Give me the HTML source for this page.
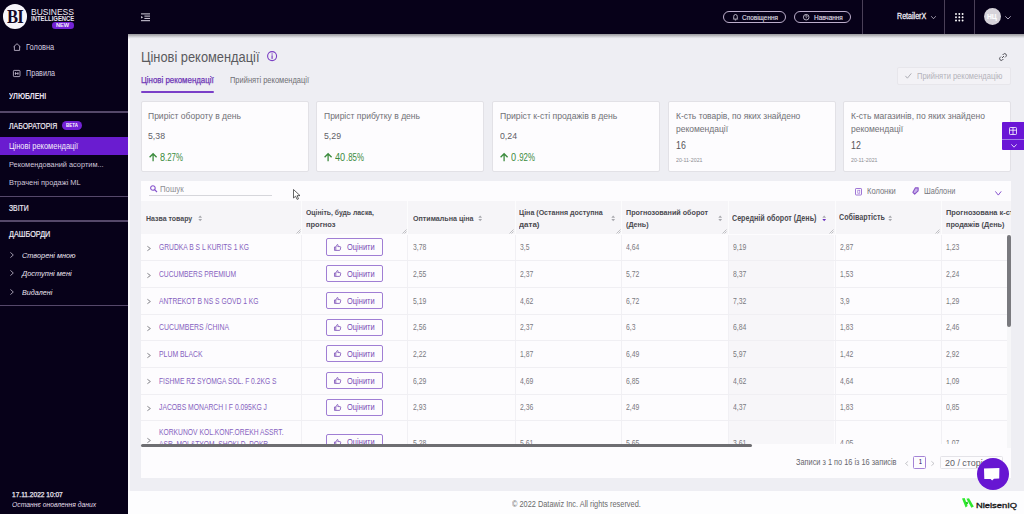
<!DOCTYPE html>
<html><head><meta charset="utf-8">
<style>
html,body{margin:0;padding:0;}
body{width:1024px;height:514px;overflow:hidden;position:relative;background:#eeeef3;font-family:"Liberation Sans",sans-serif;}
.t{position:absolute;white-space:nowrap;line-height:1;transform-origin:0 0;}
.a{position:absolute;}
svg{position:absolute;overflow:visible;}
</style></head><body>
<div class="a" style="left:128px;top:34px;width:896px;height:456.5px;background:#eeeef3"></div>
<div class="a" style="left:128px;top:490.5px;width:896px;height:23.5px;background:#fdfdfe"></div>
<div class="a" style="left:128px;top:34px;width:2px;height:456.5px;background:#fafafc"></div>
<div class="t" style="left:512px;top:499.92px;font-size:8.721px;color:#6a6a6a;font-weight:400;font-style:normal;transform:scaleX(0.8457);">© 2022 Datawiz Inc. All rights reserved.</div>
<svg style="left:962.4px;top:498px" width="12" height="10" viewBox="0 0 12 10"><path d="M0 0.6 L2.6 0 L5.6 8 L3.6 9.6 Z" fill="#2ee82e"/><path d="M4.4 0.8 L7 0.2 L11.8 8.4 L9.4 9.8 Z" fill="#2ee82e"/><path d="M3.6 4.6 L5.4 3.6 L6.2 5.6 L4.8 6.8 Z" fill="#1fc41f"/></svg>
<div class="t" style="left:976.2px;top:501.86px;font-size:7.849px;color:#1c1c1c;font-weight:400;font-style:normal;transform:scaleX(1.1956);-webkit-text-stroke:0.35px #1c1c1c">NielsenIQ</div>
<div class="a" style="left:0px;top:0px;width:1024px;height:34px;background:#070119"></div>
<div class="a" style="left:128px;top:34px;width:896px;height:5px;background:linear-gradient(#9a9a9e 0px,#b2b2b6 1.4px,#d8d8dd 3px,#eeeef3 4.6px)"></div>
<svg style="left:141px;top:12.5px" width="9" height="8.5" viewBox="0 0 9 8.5"><g stroke="#e4dfec" stroke-width="0.95"><line x1="0" y1="0.9" x2="9" y2="0.9"/><line x1="3.4" y1="3.1" x2="9" y2="3.1"/><line x1="3.4" y1="5.4" x2="9" y2="5.4"/><line x1="0" y1="7.7" x2="9" y2="7.7"/></g><path d="M0.2 2.9 L2 4.25 L0.2 5.6Z" fill="#f0ecf6"/></svg>
<div class="a" style="left:722.8px;top:10.9px;width:63.5px;height:12.2px;border:1px solid #bcaecb;border-radius:7px;box-sizing:border-box"></div>
<svg style="left:732.5px;top:13.8px" width="5" height="6.5" viewBox="0 0 5 6.5"><path d="M0.7 4.6 L0.7 2.6 Q0.7 0.5 2.5 0.5 Q4.3 0.5 4.3 2.6 L4.3 4.6 L4.7 5.1 L0.3 5.1 Z M1.8 6 L3.2 6" fill="none" stroke="#e6e1ec" stroke-width="0.75"/></svg>
<div class="t" style="left:742px;top:14.20px;font-size:7.558px;color:#e6e0ee;font-weight:400;font-style:normal;transform:scaleX(0.8536);-webkit-text-stroke:0.1px #e6e0ee">Сповіщення</div>
<div class="a" style="left:794.4px;top:10.9px;width:57px;height:12.2px;border:1px solid #bcaecb;border-radius:7px;box-sizing:border-box"></div>
<svg style="left:803px;top:13.8px" width="6.5" height="6.5" viewBox="0 0 6.5 6.5"><circle cx="3.2" cy="3.2" r="2.8" fill="none" stroke="#e6e1ec" stroke-width="0.75"/><path d="M2.3 2.5 Q2.3 1.5 3.2 1.5 Q4.1 1.5 4.1 2.4 Q4.1 3.1 3.2 3.4 L3.2 4 M3.2 4.7 L3.2 5.1" fill="none" stroke="#e6e1ec" stroke-width="0.65"/></svg>
<div class="t" style="left:814px;top:14.20px;font-size:7.558px;color:#e6e0ee;font-weight:400;font-style:normal;transform:scaleX(0.8502);-webkit-text-stroke:0.1px #e6e0ee">Навчання</div>
<div class="a" style="left:862px;top:0px;width:1px;height:34px;background:#4a4058"></div>
<div class="a" style="left:944px;top:0px;width:1px;height:34px;background:#4a4058"></div>
<div class="a" style="left:974px;top:0px;width:1px;height:34px;background:#4a4058"></div>
<div class="t" style="left:896.5px;top:12.91px;font-size:8.140px;color:#ece8f2;font-weight:400;font-style:normal;transform:scaleX(0.8737);-webkit-text-stroke:0.3px #ece8f2">RetailerX</div>
<svg style="left:930.5px;top:15.5px" width="5" height="3" viewBox="0 0 5 3"><path d="M0.2 0.2 L2.5 2.7 L4.8 0.2" fill="none" stroke="#d8d2e0" stroke-width="0.7"/></svg>
<svg style="left:954.8px;top:12.8px" width="9" height="9" viewBox="0 0 9 9"><circle cx="1.0" cy="1.0" r="0.95" fill="#fff"/><circle cx="1.0" cy="4.25" r="0.95" fill="#fff"/><circle cx="1.0" cy="7.5" r="0.95" fill="#fff"/><circle cx="4.3" cy="1.0" r="0.95" fill="#fff"/><circle cx="4.3" cy="4.25" r="0.95" fill="#fff"/><circle cx="4.3" cy="7.5" r="0.95" fill="#fff"/><circle cx="7.6" cy="1.0" r="0.95" fill="#fff"/><circle cx="7.6" cy="4.25" r="0.95" fill="#fff"/><circle cx="7.6" cy="7.5" r="0.95" fill="#fff"/></svg>
<div class="a" style="left:983.5px;top:8.3px;width:17.2px;height:17px;background:#d6d3da;border-radius:50%"></div>
<div class="t" style="left:987px;top:13.05px;font-size:7.267px;color:#fbfbfd;font-weight:700;font-style:normal;transform:scaleX(0.9197);-webkit-text-stroke:0.2px #fff">НЦ</div>
<svg style="left:1005px;top:16px" width="6" height="3.5" viewBox="0 0 6 3.5"><path d="M0.3 0.3 L3 3 L5.7 0.3" fill="none" stroke="#cfc6dc" stroke-width="0.8"/></svg>
<div class="a" style="left:0px;top:0px;width:128px;height:514px;background:#070119"></div>
<div class="a" style="left:2.8px;top:4.4px;width:24.5px;height:25px;background:#f7f5fa;border-radius:50%"></div>
<div class="t" style="left:7.1px;top:7.9px;font-family:'Liberation Serif',serif;font-size:18px;font-weight:700;color:#150826;letter-spacing:-0.9px;transform:scaleX(0.92);transform-origin:0 0">BI</div>
<div class="t" style="left:30.9px;top:6.68px;font-size:9.593px;color:#f2eef6;font-weight:400;font-style:normal;transform:scaleX(0.8854);">BUSINESS</div>
<div class="t" style="left:30.9px;top:15.10px;font-size:7.558px;color:#e8e4ee;font-weight:700;font-style:normal;transform:scaleX(0.7822);">INTELLIGENCE</div>
<div class="a" style="left:51.6px;top:22.3px;width:22.2px;height:6.6px;background:#7322d6;border-radius:3.3px"></div>
<div class="t" style="left:55.9px;top:22.50px;font-size:5.669px;color:#f4f0fa;font-weight:700;font-style:normal;transform:scaleX(0.9998);">NEW</div>
<svg style="left:12.5px;top:43px" width="8" height="8" viewBox="0 0 8 8"><path d="M0.6 3.8 L4 0.7 L7.4 3.8 M1.4 3.2 L1.4 7.4 L6.6 7.4 L6.6 3.2" fill="none" stroke="#cfc7da" stroke-width="0.8"/></svg>
<div class="t" style="left:25.8px;top:43.81px;font-size:8.140px;color:#d6cfe0;font-weight:400;font-style:normal;transform:scaleX(0.9134);">Головна</div>
<svg style="left:12.9px;top:69.5px" width="7.4" height="7" viewBox="0 0 7.4 7"><rect x="0.4" y="0.4" width="6.6" height="6.2" rx="0.8" fill="none" stroke="#cfc7da" stroke-width="0.8"/><path d="M2.5 2 L2.5 5 M4.9 2 L4.9 5 M1.8 3.5 L5.6 3.5" stroke="#cfc7da" stroke-width="0.7"/></svg>
<div class="t" style="left:25.9px;top:69.06px;font-size:8.430px;color:#d6cfe0;font-weight:400;font-style:normal;transform:scaleX(0.8508);">Правила</div>
<div class="t" style="left:8.8px;top:93.09px;font-size:8.285px;color:#e6e0ee;font-weight:700;font-style:normal;transform:scaleX(0.8365);">УЛЮБЛЕНІ</div>
<div class="a" style="left:0px;top:111px;width:128px;height:1.5px;background:#55486a"></div>
<div class="t" style="left:8.8px;top:122.16px;font-size:8.430px;color:#efeaf4;font-weight:400;font-style:normal;transform:scaleX(0.8239);-webkit-text-stroke:0.2px #efeaf4">ЛАБОРАТОРІЯ</div>
<div class="a" style="left:62px;top:121px;width:20px;height:8.7px;background:#7322d6;border-radius:4.5px"></div>
<div class="t" style="left:65.9px;top:123.00px;font-size:5.669px;color:#fff;font-weight:700;font-style:normal;transform:scaleX(0.7942);">BETA</div>
<div class="a" style="left:0px;top:137px;width:127.6px;height:17.75px;background:#6a1cd0"></div>
<div class="t" style="left:8.9px;top:142.59px;font-size:8.285px;color:#f4eefa;font-weight:400;font-style:normal;transform:scaleX(0.9059);">Цінові рекомендації</div>
<div class="t" style="left:8.9px;top:161.03px;font-size:7.994px;color:#cfc6da;font-weight:400;font-style:normal;transform:scaleX(0.9228);">Рекомендований асортим...</div>
<div class="t" style="left:8.9px;top:179.48px;font-size:7.703px;color:#cfc6da;font-weight:400;font-style:normal;transform:scaleX(0.9673);">Втрачені продажі ML</div>
<div class="a" style="left:0px;top:195.5px;width:128px;height:1.5px;background:#55486a"></div>
<div class="t" style="left:8.9px;top:205.31px;font-size:8.140px;color:#ebe5f2;font-weight:400;font-style:normal;transform:scaleX(0.8379);-webkit-text-stroke:0.2px #ebe5f2">ЗВІТИ</div>
<div class="a" style="left:0px;top:220px;width:128px;height:1.5px;background:#55486a"></div>
<div class="t" style="left:8.9px;top:230.81px;font-size:8.140px;color:#efeaf4;font-weight:400;font-style:normal;transform:scaleX(0.8948);-webkit-text-stroke:0.2px #efeaf4">ДАШБОРДИ</div>
<svg style="left:10px;top:252.2px" width="4" height="6" viewBox="0 0 4 6"><path d="M0.4 0.4 L3.3 3 L0.4 5.6" fill="none" stroke="#cfc7da" stroke-width="0.75"/></svg>
<div class="t" style="left:21.5px;top:251.83px;font-size:7.994px;color:#ece6f2;font-weight:400;font-style:italic;transform:scaleX(0.9155);">Створені мною</div>
<svg style="left:10px;top:270.2px" width="4" height="6" viewBox="0 0 4 6"><path d="M0.4 0.4 L3.3 3 L0.4 5.6" fill="none" stroke="#cfc7da" stroke-width="0.75"/></svg>
<div class="t" style="left:21.5px;top:269.83px;font-size:7.994px;color:#ece6f2;font-weight:400;font-style:italic;transform:scaleX(0.9309);">Доступні мені</div>
<svg style="left:10px;top:288.9px" width="4" height="6" viewBox="0 0 4 6"><path d="M0.4 0.4 L3.3 3 L0.4 5.6" fill="none" stroke="#cfc7da" stroke-width="0.75"/></svg>
<div class="t" style="left:21.5px;top:288.53px;font-size:7.994px;color:#ece6f2;font-weight:400;font-style:italic;transform:scaleX(0.9003);">Видалені</div>
<div class="a" style="left:0px;top:304.5px;width:128px;height:1.5px;background:#55486a"></div>
<div class="t" style="left:11.9px;top:491.19px;font-size:6.977px;color:#ece8f2;font-weight:400;font-style:normal;transform:scaleX(0.9451);-webkit-text-stroke:0.25px #ece8f2">17.11.2022 10:07</div>
<div class="t" style="left:11.9px;top:501.39px;font-size:6.977px;color:#e4dfea;font-weight:400;font-style:italic;transform:scaleX(0.9709);">Останнє оновлення даних</div>
<div class="t" style="left:141.3px;top:50.27px;font-size:14.099px;color:#5a5a5e;font-weight:400;font-style:normal;transform:scaleX(0.9122);">Цінові рекомендації</div>
<svg style="left:266.7px;top:51px" width="10.2" height="10.2" viewBox="0 0 10.2 10.2"><circle cx="5.1" cy="5.1" r="4.5" fill="none" stroke="#7b3fc4" stroke-width="1.1"/><rect x="4.5" y="2.4" width="1.2" height="1.2" fill="#7b3fc4"/><rect x="4.5" y="4.3" width="1.2" height="3.6" fill="#7b3fc4"/></svg>
<div class="t" style="left:140.7px;top:76.09px;font-size:8.866px;color:#6d35b5;font-weight:400;font-style:normal;transform:scaleX(0.8893);-webkit-text-stroke:0.25px #6d35b5">Цінові рекомендації</div>
<div class="t" style="left:230px;top:76.09px;font-size:8.866px;color:#6e6e74;font-weight:400;font-style:normal;transform:scaleX(0.8437);">Прийняті рекомендації</div>
<div class="a" style="left:141px;top:90.5px;width:72.5px;height:2px;background:#7a3fc8;border-radius:1px"></div>
<svg style="left:998.9px;top:53.3px" width="8" height="8" viewBox="0 0 8 8"><g fill="none" stroke="#505058" stroke-width="1"><path d="M3 5 L5 3"/><path d="M3.6 2 L4.6 1 Q5.8 0 6.9 1.1 Q8 2.2 7 3.4 L6 4.4"/><path d="M4.4 6 L3.4 7 Q2.2 8 1.1 6.9 Q0 5.8 1 4.6 L2 3.6"/></g></svg>
<div class="a" style="left:897px;top:67.3px;width:113.6px;height:17.3px;background:#f3f2f6;border:1px solid #e7e6eb;border-radius:2px;box-sizing:border-box"></div>
<svg style="left:905.2px;top:72.8px" width="6.6" height="5.7" viewBox="0 0 6.6 5.7"><path d="M0.4 2.9 L2.4 5.2 L6.3 0.4" fill="none" stroke="#a5a5ad" stroke-width="0.9"/></svg>
<div class="t" style="left:916.9px;top:72.26px;font-size:8.430px;color:#b3b3ba;font-weight:400;font-style:normal;transform:scaleX(0.8922);">Прийняти рекомендацію</div>
<div class="a" style="left:140.5px;top:100.8px;width:168.2px;height:71.2px;background:#fdfcfe;border:1px solid #e2e1e6;border-radius:2px;box-sizing:border-box"></div>
<div class="t" style="left:148.0px;top:112.07px;font-size:9.012px;color:#707076;font-weight:400;font-style:normal;transform:scaleX(0.9477);">Приріст обороту в день</div>
<div class="t" style="left:148.0px;top:131.46px;font-size:9.738px;color:#606066;font-weight:400;font-style:normal;transform:scaleX(0.8984);">5,38</div>
<svg style="left:148.8px;top:153.4px" width="8.2" height="8.2" viewBox="0 0 8.2 8.2"><path d="M4.1 8.2 L4.1 0.9 M0.6 4.3 L4.1 0.7 L7.6 4.3" fill="none" stroke="#3b8b3d" stroke-width="1.3"/></svg>
<div class="t" style="left:159.7px;top:152.25px;font-size:11.047px;color:#3b8b3d;font-weight:400;font-style:normal;transform:scaleX(0.8305);">8</div>
<div class="t" style="left:164.99999999999997px;top:153.31px;font-size:10.029px;color:#3b8b3d;font-weight:400;font-style:normal;transform:scaleX(0.7880);">.27%</div>
<div class="a" style="left:316.1px;top:100.8px;width:168.2px;height:71.2px;background:#fdfcfe;border:1px solid #e2e1e6;border-radius:2px;box-sizing:border-box"></div>
<div class="t" style="left:323.6px;top:112.07px;font-size:9.012px;color:#707076;font-weight:400;font-style:normal;transform:scaleX(0.9471);">Приріст прибутку в день</div>
<div class="t" style="left:323.6px;top:131.46px;font-size:9.738px;color:#606066;font-weight:400;font-style:normal;transform:scaleX(0.8984);">5,29</div>
<svg style="left:324.40000000000003px;top:153.4px" width="8.2" height="8.2" viewBox="0 0 8.2 8.2"><path d="M4.1 8.2 L4.1 0.9 M0.6 4.3 L4.1 0.7 L7.6 4.3" fill="none" stroke="#3b8b3d" stroke-width="1.3"/></svg>
<div class="t" style="left:335.3px;top:152.25px;font-size:11.047px;color:#3b8b3d;font-weight:400;font-style:normal;transform:scaleX(0.8305);">40</div>
<div class="t" style="left:345.7px;top:153.31px;font-size:10.029px;color:#3b8b3d;font-weight:400;font-style:normal;transform:scaleX(0.7880);">.85%</div>
<div class="a" style="left:492.1px;top:100.8px;width:168.2px;height:71.2px;background:#fdfcfe;border:1px solid #e2e1e6;border-radius:2px;box-sizing:border-box"></div>
<div class="t" style="left:499.6px;top:112.07px;font-size:9.012px;color:#707076;font-weight:400;font-style:normal;transform:scaleX(0.9604);">Приріст к-сті продажів в день</div>
<div class="t" style="left:499.6px;top:131.46px;font-size:9.738px;color:#606066;font-weight:400;font-style:normal;transform:scaleX(0.8984);">0,24</div>
<svg style="left:500.40000000000003px;top:153.4px" width="8.2" height="8.2" viewBox="0 0 8.2 8.2"><path d="M4.1 8.2 L4.1 0.9 M0.6 4.3 L4.1 0.7 L7.6 4.3" fill="none" stroke="#3b8b3d" stroke-width="1.3"/></svg>
<div class="t" style="left:511.3px;top:152.25px;font-size:11.047px;color:#3b8b3d;font-weight:400;font-style:normal;transform:scaleX(0.8305);">0</div>
<div class="t" style="left:516.6px;top:153.31px;font-size:10.029px;color:#3b8b3d;font-weight:400;font-style:normal;transform:scaleX(0.7880);">.92%</div>
<div class="a" style="left:668.1px;top:100.8px;width:168.2px;height:71.2px;background:#fdfcfe;border:1px solid #e2e1e6;border-radius:2px;box-sizing:border-box"></div>
<div class="t" style="left:675.6px;top:112.07px;font-size:9.012px;color:#707076;font-weight:400;font-style:normal;transform:scaleX(0.9407);">К-сть товарів, по яких знайдено</div>
<div class="t" style="left:675.6px;top:125.07px;font-size:9.012px;color:#707076;font-weight:400;font-style:normal;transform:scaleX(0.9449);">рекомендації</div>
<div class="t" style="left:675.6px;top:140.51px;font-size:10.029px;color:#555559;font-weight:400;font-style:normal;transform:scaleX(0.8797);">16</div>
<div class="t" style="left:675.6px;top:157.65px;font-size:5.378px;color:#8c8c92;font-weight:400;font-style:normal;transform:scaleX(0.9803);">20-11-2021</div>
<div class="a" style="left:843.1px;top:100.8px;width:168.2px;height:71.2px;background:#fdfcfe;border:1px solid #e2e1e6;border-radius:2px;box-sizing:border-box"></div>
<div class="t" style="left:850.6px;top:112.07px;font-size:9.012px;color:#707076;font-weight:400;font-style:normal;transform:scaleX(0.9454);">К-сть магазинів, по яких знайдено</div>
<div class="t" style="left:850.6px;top:125.07px;font-size:9.012px;color:#707076;font-weight:400;font-style:normal;transform:scaleX(0.9449);">рекомендації</div>
<div class="t" style="left:850.6px;top:140.51px;font-size:10.029px;color:#555559;font-weight:400;font-style:normal;transform:scaleX(0.8797);">12</div>
<div class="t" style="left:850.6px;top:157.65px;font-size:5.378px;color:#8c8c92;font-weight:400;font-style:normal;transform:scaleX(0.9803);">20-11-2021</div>
<div class="a" style="left:1002.2px;top:122.2px;width:21.8px;height:27.6px;background:#6a16d6;border-radius:1px 0 0 1px"></div>
<div class="a" style="left:1002.2px;top:139px;width:21.8px;height:0.9px;background:#a27ce6"></div>
<svg style="left:1009px;top:127px" width="8" height="8" viewBox="0 0 8 8"><g fill="none" stroke="#fff" stroke-width="0.8"><rect x="0.5" y="0.5" width="7" height="7" rx="0.8"/><path d="M0.5 3.2 L7.5 3.2 M4 0.5 L4 7.5"/></g></svg>
<svg style="left:1010.5px;top:143.5px" width="6" height="4" viewBox="0 0 6 4"><path d="M0.4 0.4 L3 3.2 L5.6 0.4" fill="none" stroke="#fff" stroke-width="0.8"/></svg>
<div class="a" style="left:140.7px;top:180.7px;width:870.5px;height:297.4px;background:#fdfcfe"></div>
<svg style="left:149.6px;top:185px" width="7.5" height="7.2" viewBox="0 0 7.5 7.2"><circle cx="2.9" cy="3" r="2.3" fill="none" stroke="#8552cc" stroke-width="1.05"/><path d="M4.6 4.7 L7 7" stroke="#8552cc" stroke-width="1.2"/></svg>
<div class="t" style="left:160.2px;top:184.94px;font-size:8.576px;color:#8e8e94;font-weight:400;font-style:normal;transform:scaleX(0.9137);">Пошук</div>
<div class="a" style="left:149px;top:195px;width:123px;height:1px;background:#d6d6db"></div>
<svg style="left:293px;top:188.5px" width="8" height="11" viewBox="0 0 8 11"><path d="M0.5 0.5 L0.5 9 L2.6 7.2 L4.1 10.4 L5.5 9.8 L4.1 6.7 L7 6.6 Z" fill="#fff" stroke="#222" stroke-width="0.7"/></svg>
<svg style="left:854.8px;top:187.5px" width="7" height="7.5" viewBox="0 0 7 7.5"><rect x="0.5" y="0.5" width="6" height="6.5" rx="0.6" fill="none" stroke="#9466d0" stroke-width="0.9"/><rect x="2.8" y="2.2" width="2" height="3" fill="none" stroke="#9466d0" stroke-width="0.6"/></svg>
<div class="t" style="left:867px;top:187.22px;font-size:8.721px;color:#76767c;font-weight:400;font-style:normal;transform:scaleX(0.8654);">Колонки</div>
<svg style="left:912px;top:187.2px" width="7" height="8" viewBox="0 0 7 8"><path d="M3.4 0.8 L6.2 0.9 L6.1 3.9 L2.7 7.2 L0.9 5.3 Z" fill="#c8b0ea" stroke="#8a55c8" stroke-width="1.1" stroke-linejoin="round"/></svg>
<div class="t" style="left:923.6px;top:187.22px;font-size:8.721px;color:#76767c;font-weight:400;font-style:normal;transform:scaleX(0.8447);">Шаблони</div>
<svg style="left:995.4px;top:190.5px" width="6.6" height="4.5" viewBox="0 0 6.6 4.5"><path d="M0.4 0.4 L3.3 4.1 L6.2 0.4" fill="none" stroke="#7b40c8" stroke-width="0.9"/></svg>
<div class="a" style="left:140.7px;top:201.2px;width:870.5px;height:33.3px;background:#f6f5f8"></div>
<div class="a" style="left:727.6px;top:234.5px;width:106.9px;height:209px;background:#f7f6f9"></div>
<div class="a" style="left:301px;top:201.2px;width:1px;height:33.3px;background:#fcfcfd"></div>
<div class="a" style="left:301px;top:234.5px;width:0.8px;height:209px;background:#f1f0f4"></div>
<div class="a" style="left:407.4px;top:201.2px;width:1px;height:33.3px;background:#fcfcfd"></div>
<div class="a" style="left:407.4px;top:234.5px;width:0.8px;height:209px;background:#f1f0f4"></div>
<div class="a" style="left:514.6px;top:201.2px;width:1px;height:33.3px;background:#fcfcfd"></div>
<div class="a" style="left:514.6px;top:234.5px;width:0.8px;height:209px;background:#f1f0f4"></div>
<div class="a" style="left:621.1px;top:201.2px;width:1px;height:33.3px;background:#fcfcfd"></div>
<div class="a" style="left:621.1px;top:234.5px;width:0.8px;height:209px;background:#f1f0f4"></div>
<div class="a" style="left:727.6px;top:201.2px;width:1px;height:33.3px;background:#fcfcfd"></div>
<div class="a" style="left:727.6px;top:234.5px;width:0.8px;height:209px;background:#f1f0f4"></div>
<div class="a" style="left:834.5px;top:201.2px;width:1px;height:33.3px;background:#fcfcfd"></div>
<div class="a" style="left:834.5px;top:234.5px;width:0.8px;height:209px;background:#f1f0f4"></div>
<div class="a" style="left:940.7px;top:201.2px;width:1px;height:33.3px;background:#fcfcfd"></div>
<div class="a" style="left:940.7px;top:234.5px;width:0.8px;height:209px;background:#f1f0f4"></div>
<svg style="left:295.5px;top:229px" width="5" height="5" viewBox="0 0 5 5"><path d="M0.5 4.5 L4.5 0.5 M2.5 4.5 L4.5 2.5" stroke="#9a9aa0" stroke-width="0.6"/></svg>
<svg style="left:401.9px;top:229px" width="5" height="5" viewBox="0 0 5 5"><path d="M0.5 4.5 L4.5 0.5 M2.5 4.5 L4.5 2.5" stroke="#9a9aa0" stroke-width="0.6"/></svg>
<svg style="left:509.1px;top:229px" width="5" height="5" viewBox="0 0 5 5"><path d="M0.5 4.5 L4.5 0.5 M2.5 4.5 L4.5 2.5" stroke="#9a9aa0" stroke-width="0.6"/></svg>
<svg style="left:615.6px;top:229px" width="5" height="5" viewBox="0 0 5 5"><path d="M0.5 4.5 L4.5 0.5 M2.5 4.5 L4.5 2.5" stroke="#9a9aa0" stroke-width="0.6"/></svg>
<svg style="left:722.1px;top:229px" width="5" height="5" viewBox="0 0 5 5"><path d="M0.5 4.5 L4.5 0.5 M2.5 4.5 L4.5 2.5" stroke="#9a9aa0" stroke-width="0.6"/></svg>
<svg style="left:829.0px;top:229px" width="5" height="5" viewBox="0 0 5 5"><path d="M0.5 4.5 L4.5 0.5 M2.5 4.5 L4.5 2.5" stroke="#9a9aa0" stroke-width="0.6"/></svg>
<svg style="left:935.2px;top:229px" width="5" height="5" viewBox="0 0 5 5"><path d="M0.5 4.5 L4.5 0.5 M2.5 4.5 L4.5 2.5" stroke="#9a9aa0" stroke-width="0.6"/></svg>
<div class="t" style="left:146px;top:214.76px;font-size:7.849px;color:#4a4a50;font-weight:700;font-style:normal;transform:scaleX(0.8911);">Назва товару</div>
<svg style="left:197.6px;top:215.4px" width="4.4" height="6.6" viewBox="0 0 4.4 6.6"><path d="M0.3 2.7 L2.2 0.4 L4.1 2.7 Z" fill="#a8a8ae"/><path d="M0.3 3.9 L2.2 6.2 L4.1 3.9 Z" fill="#a8a8ae"/></svg>
<div class="t" style="left:305.8px;top:209.13px;font-size:7.994px;color:#4a4a50;font-weight:700;font-style:normal;transform:scaleX(0.8552);">Оцініть, будь ласка,</div>
<div class="t" style="left:305.8px;top:220.63px;font-size:7.994px;color:#4a4a50;font-weight:700;font-style:normal;transform:scaleX(0.9374);">прогноз</div>
<div class="t" style="left:412.5px;top:215.36px;font-size:7.849px;color:#4a4a50;font-weight:700;font-style:normal;transform:scaleX(0.9081);">Оптимальна ціна</div>
<svg style="left:477.7px;top:215.3px" width="4.4" height="6.6" viewBox="0 0 4.4 6.6"><path d="M0.3 2.7 L2.2 0.4 L4.1 2.7 Z" fill="#a8a8ae"/><path d="M0.3 3.9 L2.2 6.2 L4.1 3.9 Z" fill="#a8a8ae"/></svg>
<div class="t" style="left:519.1px;top:209.13px;font-size:7.994px;color:#4a4a50;font-weight:700;font-style:normal;transform:scaleX(0.8844);">Ціна (Остання доступна</div>
<div class="t" style="left:519.1px;top:220.63px;font-size:7.994px;color:#4a4a50;font-weight:700;font-style:normal;transform:scaleX(0.9985);">дата)</div>
<svg style="left:611.4px;top:215.10000000000002px" width="4.4" height="6.6" viewBox="0 0 4.4 6.6"><path d="M0.3 2.7 L2.2 0.4 L4.1 2.7 Z" fill="#a8a8ae"/><path d="M0.3 3.9 L2.2 6.2 L4.1 3.9 Z" fill="#a8a8ae"/></svg>
<div class="t" style="left:626px;top:209.33px;font-size:7.994px;color:#4a4a50;font-weight:700;font-style:normal;transform:scaleX(0.8979);">Прогнозований оборот</div>
<div class="t" style="left:626px;top:220.83px;font-size:7.994px;color:#4a4a50;font-weight:700;font-style:normal;transform:scaleX(0.8939);">(День)</div>
<svg style="left:718px;top:215.10000000000002px" width="4.4" height="6.6" viewBox="0 0 4.4 6.6"><path d="M0.3 2.7 L2.2 0.4 L4.1 2.7 Z" fill="#a8a8ae"/><path d="M0.3 3.9 L2.2 6.2 L4.1 3.9 Z" fill="#a8a8ae"/></svg>
<div class="t" style="left:732.3px;top:214.71px;font-size:8.140px;color:#4a4a50;font-weight:700;font-style:normal;transform:scaleX(0.8785);">Середній оборот (День)</div>
<svg style="left:821.8px;top:215.10000000000002px" width="4.4" height="6.6" viewBox="0 0 4.4 6.6"><path d="M0.3 2.7 L2.2 0.4 L4.1 2.7 Z" fill="#a8a8ae"/><path d="M0.3 3.9 L2.2 6.2 L4.1 3.9 Z" fill="#6a2fc0"/></svg>
<div class="t" style="left:838.6px;top:214.31px;font-size:8.140px;color:#4a4a50;font-weight:700;font-style:normal;transform:scaleX(0.8789);">Собівартість</div>
<svg style="left:887.5px;top:215.10000000000002px" width="4.4" height="6.6" viewBox="0 0 4.4 6.6"><path d="M0.3 2.7 L2.2 0.4 L4.1 2.7 Z" fill="#a8a8ae"/><path d="M0.3 3.9 L2.2 6.2 L4.1 3.9 Z" fill="#a8a8ae"/></svg>
<div class="a" style="left:940.7px;top:201.2px;width:70.5px;height:33.3px;overflow:hidden"><div class="t" style="left:5.2px;top:8.13px;font-size:7.994px;color:#4a4a50;font-weight:700;font-style:normal;transform:scaleX(0.9266);">Прогнозована к-сть</div>
<div class="t" style="left:5.2px;top:19.63px;font-size:7.994px;color:#4a4a50;font-weight:700;font-style:normal;transform:scaleX(0.9103);">продажів (День)</div>
</div>
<div class="a" style="left:0;top:0;width:1011px;height:443.6px;overflow:hidden"><div class="a" style="left:140.7px;top:260.2px;width:866.3px;height:1px;background:#f0eff3"></div>
<svg style="left:147px;top:245.8px" width="4" height="5" viewBox="0 0 4 5"><path d="M0.4 0.3 L3.4 2.5 L0.4 4.7" fill="none" stroke="#6a6a70" stroke-width="0.8"/></svg>
<div class="t" style="left:159px;top:243.16px;font-size:8.430px;color:#8662c0;font-weight:400;font-style:normal;transform:scaleX(0.7968);">GRUDKA B S L KURITS 1 KG</div>
<div class="a" style="left:326px;top:238.4px;width:57px;height:17.3px;border:1px solid #a07ed4;border-radius:2px;box-sizing:border-box;background:#fdfcfe"></div>
<svg style="left:334.4px;top:243.5px" width="7.2" height="6.8" viewBox="0 0 7.2 6.8"><path d="M0.5 3 L1.8 3 L1.8 6.4 L0.5 6.4 Z M1.8 3 L3.3 0.5 Q4.2 0.5 4.1 1.6 L3.8 2.6 L6.2 2.6 Q6.9 2.8 6.7 3.5 L6.2 5.9 Q6 6.4 5.4 6.4 L1.8 6.4" fill="none" stroke="#7a4cb6" stroke-width="0.8"/></svg>
<div class="t" style="left:346.5px;top:243.16px;font-size:8.430px;color:#7a4cb6;font-weight:400;font-style:normal;transform:scaleX(0.8886);">Оцінити</div>
<div class="t" style="left:412.7px;top:243.24px;font-size:8.576px;color:#7a7a80;font-weight:400;font-style:normal;transform:scaleX(0.7978);">3,78</div>
<div class="t" style="left:519.9px;top:243.24px;font-size:8.576px;color:#7a7a80;font-weight:400;font-style:normal;transform:scaleX(0.7979);">3,5</div>
<div class="t" style="left:626.4px;top:243.24px;font-size:8.576px;color:#7a7a80;font-weight:400;font-style:normal;transform:scaleX(0.7978);">4,64</div>
<div class="t" style="left:732.9px;top:243.24px;font-size:8.576px;color:#7a7a80;font-weight:400;font-style:normal;transform:scaleX(0.7978);">9,19</div>
<div class="t" style="left:839.8px;top:243.24px;font-size:8.576px;color:#7a7a80;font-weight:400;font-style:normal;transform:scaleX(0.7978);">2,87</div>
<div class="t" style="left:946.0px;top:243.24px;font-size:8.576px;color:#7a7a80;font-weight:400;font-style:normal;transform:scaleX(0.7978);">1,23</div>
<div class="a" style="left:140.7px;top:286.9px;width:866.3px;height:1px;background:#f0eff3"></div>
<svg style="left:147px;top:272.5px" width="4" height="5" viewBox="0 0 4 5"><path d="M0.4 0.3 L3.4 2.5 L0.4 4.7" fill="none" stroke="#6a6a70" stroke-width="0.8"/></svg>
<div class="t" style="left:159px;top:269.86px;font-size:8.430px;color:#8662c0;font-weight:400;font-style:normal;transform:scaleX(0.7999);">CUCUMBERS PREMIUM</div>
<div class="a" style="left:326px;top:265.09999999999997px;width:57px;height:17.3px;border:1px solid #a07ed4;border-radius:2px;box-sizing:border-box;background:#fdfcfe"></div>
<svg style="left:334.4px;top:270.2px" width="7.2" height="6.8" viewBox="0 0 7.2 6.8"><path d="M0.5 3 L1.8 3 L1.8 6.4 L0.5 6.4 Z M1.8 3 L3.3 0.5 Q4.2 0.5 4.1 1.6 L3.8 2.6 L6.2 2.6 Q6.9 2.8 6.7 3.5 L6.2 5.9 Q6 6.4 5.4 6.4 L1.8 6.4" fill="none" stroke="#7a4cb6" stroke-width="0.8"/></svg>
<div class="t" style="left:346.5px;top:269.86px;font-size:8.430px;color:#7a4cb6;font-weight:400;font-style:normal;transform:scaleX(0.8886);">Оцінити</div>
<div class="t" style="left:412.7px;top:269.94px;font-size:8.576px;color:#7a7a80;font-weight:400;font-style:normal;transform:scaleX(0.7978);">2,55</div>
<div class="t" style="left:519.9px;top:269.94px;font-size:8.576px;color:#7a7a80;font-weight:400;font-style:normal;transform:scaleX(0.7978);">2,37</div>
<div class="t" style="left:626.4px;top:269.94px;font-size:8.576px;color:#7a7a80;font-weight:400;font-style:normal;transform:scaleX(0.7978);">5,72</div>
<div class="t" style="left:732.9px;top:269.94px;font-size:8.576px;color:#7a7a80;font-weight:400;font-style:normal;transform:scaleX(0.7978);">8,37</div>
<div class="t" style="left:839.8px;top:269.94px;font-size:8.576px;color:#7a7a80;font-weight:400;font-style:normal;transform:scaleX(0.7978);">1,53</div>
<div class="t" style="left:946.0px;top:269.94px;font-size:8.576px;color:#7a7a80;font-weight:400;font-style:normal;transform:scaleX(0.7978);">2,24</div>
<div class="a" style="left:140.7px;top:313.59999999999997px;width:866.3px;height:1px;background:#f0eff3"></div>
<svg style="left:147px;top:299.2px" width="4" height="5" viewBox="0 0 4 5"><path d="M0.4 0.3 L3.4 2.5 L0.4 4.7" fill="none" stroke="#6a6a70" stroke-width="0.8"/></svg>
<div class="t" style="left:159px;top:296.56px;font-size:8.430px;color:#8662c0;font-weight:400;font-style:normal;transform:scaleX(0.8010);">ANTREKOT B NS S GOVD 1 KG</div>
<div class="a" style="left:326px;top:291.79999999999995px;width:57px;height:17.3px;border:1px solid #a07ed4;border-radius:2px;box-sizing:border-box;background:#fdfcfe"></div>
<svg style="left:334.4px;top:296.9px" width="7.2" height="6.8" viewBox="0 0 7.2 6.8"><path d="M0.5 3 L1.8 3 L1.8 6.4 L0.5 6.4 Z M1.8 3 L3.3 0.5 Q4.2 0.5 4.1 1.6 L3.8 2.6 L6.2 2.6 Q6.9 2.8 6.7 3.5 L6.2 5.9 Q6 6.4 5.4 6.4 L1.8 6.4" fill="none" stroke="#7a4cb6" stroke-width="0.8"/></svg>
<div class="t" style="left:346.5px;top:296.56px;font-size:8.430px;color:#7a4cb6;font-weight:400;font-style:normal;transform:scaleX(0.8886);">Оцінити</div>
<div class="t" style="left:412.7px;top:296.64px;font-size:8.576px;color:#7a7a80;font-weight:400;font-style:normal;transform:scaleX(0.7978);">5,19</div>
<div class="t" style="left:519.9px;top:296.64px;font-size:8.576px;color:#7a7a80;font-weight:400;font-style:normal;transform:scaleX(0.7978);">4,62</div>
<div class="t" style="left:626.4px;top:296.64px;font-size:8.576px;color:#7a7a80;font-weight:400;font-style:normal;transform:scaleX(0.7978);">6,72</div>
<div class="t" style="left:732.9px;top:296.64px;font-size:8.576px;color:#7a7a80;font-weight:400;font-style:normal;transform:scaleX(0.7978);">7,32</div>
<div class="t" style="left:839.8px;top:296.64px;font-size:8.576px;color:#7a7a80;font-weight:400;font-style:normal;transform:scaleX(0.7979);">3,9</div>
<div class="t" style="left:946.0px;top:296.64px;font-size:8.576px;color:#7a7a80;font-weight:400;font-style:normal;transform:scaleX(0.7978);">1,29</div>
<div class="a" style="left:140.7px;top:340.3px;width:866.3px;height:1px;background:#f0eff3"></div>
<svg style="left:147px;top:325.90000000000003px" width="4" height="5" viewBox="0 0 4 5"><path d="M0.4 0.3 L3.4 2.5 L0.4 4.7" fill="none" stroke="#6a6a70" stroke-width="0.8"/></svg>
<div class="t" style="left:159px;top:323.26px;font-size:8.430px;color:#8662c0;font-weight:400;font-style:normal;transform:scaleX(0.8219);">CUCUMBERS /CHINA</div>
<div class="a" style="left:326px;top:318.5px;width:57px;height:17.3px;border:1px solid #a07ed4;border-radius:2px;box-sizing:border-box;background:#fdfcfe"></div>
<svg style="left:334.4px;top:323.6px" width="7.2" height="6.8" viewBox="0 0 7.2 6.8"><path d="M0.5 3 L1.8 3 L1.8 6.4 L0.5 6.4 Z M1.8 3 L3.3 0.5 Q4.2 0.5 4.1 1.6 L3.8 2.6 L6.2 2.6 Q6.9 2.8 6.7 3.5 L6.2 5.9 Q6 6.4 5.4 6.4 L1.8 6.4" fill="none" stroke="#7a4cb6" stroke-width="0.8"/></svg>
<div class="t" style="left:346.5px;top:323.26px;font-size:8.430px;color:#7a4cb6;font-weight:400;font-style:normal;transform:scaleX(0.8886);">Оцінити</div>
<div class="t" style="left:412.7px;top:323.34px;font-size:8.576px;color:#7a7a80;font-weight:400;font-style:normal;transform:scaleX(0.7978);">2,56</div>
<div class="t" style="left:519.9px;top:323.34px;font-size:8.576px;color:#7a7a80;font-weight:400;font-style:normal;transform:scaleX(0.7978);">2,37</div>
<div class="t" style="left:626.4px;top:323.34px;font-size:8.576px;color:#7a7a80;font-weight:400;font-style:normal;transform:scaleX(0.7979);">6,3</div>
<div class="t" style="left:732.9px;top:323.34px;font-size:8.576px;color:#7a7a80;font-weight:400;font-style:normal;transform:scaleX(0.7978);">6,84</div>
<div class="t" style="left:839.8px;top:323.34px;font-size:8.576px;color:#7a7a80;font-weight:400;font-style:normal;transform:scaleX(0.7978);">1,83</div>
<div class="t" style="left:946.0px;top:323.34px;font-size:8.576px;color:#7a7a80;font-weight:400;font-style:normal;transform:scaleX(0.7978);">2,46</div>
<div class="a" style="left:140.7px;top:367.0px;width:866.3px;height:1px;background:#f0eff3"></div>
<svg style="left:147px;top:352.6px" width="4" height="5" viewBox="0 0 4 5"><path d="M0.4 0.3 L3.4 2.5 L0.4 4.7" fill="none" stroke="#6a6a70" stroke-width="0.8"/></svg>
<div class="t" style="left:159px;top:349.96px;font-size:8.430px;color:#8662c0;font-weight:400;font-style:normal;transform:scaleX(0.8171);">PLUM BLACK</div>
<div class="a" style="left:326px;top:345.2px;width:57px;height:17.3px;border:1px solid #a07ed4;border-radius:2px;box-sizing:border-box;background:#fdfcfe"></div>
<svg style="left:334.4px;top:350.3px" width="7.2" height="6.8" viewBox="0 0 7.2 6.8"><path d="M0.5 3 L1.8 3 L1.8 6.4 L0.5 6.4 Z M1.8 3 L3.3 0.5 Q4.2 0.5 4.1 1.6 L3.8 2.6 L6.2 2.6 Q6.9 2.8 6.7 3.5 L6.2 5.9 Q6 6.4 5.4 6.4 L1.8 6.4" fill="none" stroke="#7a4cb6" stroke-width="0.8"/></svg>
<div class="t" style="left:346.5px;top:349.96px;font-size:8.430px;color:#7a4cb6;font-weight:400;font-style:normal;transform:scaleX(0.8886);">Оцінити</div>
<div class="t" style="left:412.7px;top:350.04px;font-size:8.576px;color:#7a7a80;font-weight:400;font-style:normal;transform:scaleX(0.7978);">2,22</div>
<div class="t" style="left:519.9px;top:350.04px;font-size:8.576px;color:#7a7a80;font-weight:400;font-style:normal;transform:scaleX(0.7978);">1,87</div>
<div class="t" style="left:626.4px;top:350.04px;font-size:8.576px;color:#7a7a80;font-weight:400;font-style:normal;transform:scaleX(0.7978);">6,49</div>
<div class="t" style="left:732.9px;top:350.04px;font-size:8.576px;color:#7a7a80;font-weight:400;font-style:normal;transform:scaleX(0.7978);">5,97</div>
<div class="t" style="left:839.8px;top:350.04px;font-size:8.576px;color:#7a7a80;font-weight:400;font-style:normal;transform:scaleX(0.7978);">1,42</div>
<div class="t" style="left:946.0px;top:350.04px;font-size:8.576px;color:#7a7a80;font-weight:400;font-style:normal;transform:scaleX(0.7978);">2,92</div>
<div class="a" style="left:140.7px;top:393.7px;width:866.3px;height:1px;background:#f0eff3"></div>
<svg style="left:147px;top:379.3px" width="4" height="5" viewBox="0 0 4 5"><path d="M0.4 0.3 L3.4 2.5 L0.4 4.7" fill="none" stroke="#6a6a70" stroke-width="0.8"/></svg>
<div class="t" style="left:159px;top:376.66px;font-size:8.430px;color:#8662c0;font-weight:400;font-style:normal;transform:scaleX(0.7970);">FISHME RZ SYOMGA SOL. F 0.2KG S</div>
<div class="a" style="left:326px;top:371.9px;width:57px;height:17.3px;border:1px solid #a07ed4;border-radius:2px;box-sizing:border-box;background:#fdfcfe"></div>
<svg style="left:334.4px;top:377.0px" width="7.2" height="6.8" viewBox="0 0 7.2 6.8"><path d="M0.5 3 L1.8 3 L1.8 6.4 L0.5 6.4 Z M1.8 3 L3.3 0.5 Q4.2 0.5 4.1 1.6 L3.8 2.6 L6.2 2.6 Q6.9 2.8 6.7 3.5 L6.2 5.9 Q6 6.4 5.4 6.4 L1.8 6.4" fill="none" stroke="#7a4cb6" stroke-width="0.8"/></svg>
<div class="t" style="left:346.5px;top:376.66px;font-size:8.430px;color:#7a4cb6;font-weight:400;font-style:normal;transform:scaleX(0.8886);">Оцінити</div>
<div class="t" style="left:412.7px;top:376.74px;font-size:8.576px;color:#7a7a80;font-weight:400;font-style:normal;transform:scaleX(0.7978);">6,29</div>
<div class="t" style="left:519.9px;top:376.74px;font-size:8.576px;color:#7a7a80;font-weight:400;font-style:normal;transform:scaleX(0.7978);">4,69</div>
<div class="t" style="left:626.4px;top:376.74px;font-size:8.576px;color:#7a7a80;font-weight:400;font-style:normal;transform:scaleX(0.7978);">6,85</div>
<div class="t" style="left:732.9px;top:376.74px;font-size:8.576px;color:#7a7a80;font-weight:400;font-style:normal;transform:scaleX(0.7978);">4,62</div>
<div class="t" style="left:839.8px;top:376.74px;font-size:8.576px;color:#7a7a80;font-weight:400;font-style:normal;transform:scaleX(0.7978);">4,64</div>
<div class="t" style="left:946.0px;top:376.74px;font-size:8.576px;color:#7a7a80;font-weight:400;font-style:normal;transform:scaleX(0.7978);">1,09</div>
<div class="a" style="left:140.7px;top:420.4px;width:866.3px;height:1px;background:#f0eff3"></div>
<svg style="left:147px;top:406.0px" width="4" height="5" viewBox="0 0 4 5"><path d="M0.4 0.3 L3.4 2.5 L0.4 4.7" fill="none" stroke="#6a6a70" stroke-width="0.8"/></svg>
<div class="t" style="left:159px;top:403.36px;font-size:8.430px;color:#8662c0;font-weight:400;font-style:normal;transform:scaleX(0.8068);">JACOBS MONARCH I F 0.095KG J</div>
<div class="a" style="left:326px;top:398.59999999999997px;width:57px;height:17.3px;border:1px solid #a07ed4;border-radius:2px;box-sizing:border-box;background:#fdfcfe"></div>
<svg style="left:334.4px;top:403.7px" width="7.2" height="6.8" viewBox="0 0 7.2 6.8"><path d="M0.5 3 L1.8 3 L1.8 6.4 L0.5 6.4 Z M1.8 3 L3.3 0.5 Q4.2 0.5 4.1 1.6 L3.8 2.6 L6.2 2.6 Q6.9 2.8 6.7 3.5 L6.2 5.9 Q6 6.4 5.4 6.4 L1.8 6.4" fill="none" stroke="#7a4cb6" stroke-width="0.8"/></svg>
<div class="t" style="left:346.5px;top:403.36px;font-size:8.430px;color:#7a4cb6;font-weight:400;font-style:normal;transform:scaleX(0.8886);">Оцінити</div>
<div class="t" style="left:412.7px;top:403.44px;font-size:8.576px;color:#7a7a80;font-weight:400;font-style:normal;transform:scaleX(0.7978);">2,93</div>
<div class="t" style="left:519.9px;top:403.44px;font-size:8.576px;color:#7a7a80;font-weight:400;font-style:normal;transform:scaleX(0.7978);">2,36</div>
<div class="t" style="left:626.4px;top:403.44px;font-size:8.576px;color:#7a7a80;font-weight:400;font-style:normal;transform:scaleX(0.7978);">2,49</div>
<div class="t" style="left:732.9px;top:403.44px;font-size:8.576px;color:#7a7a80;font-weight:400;font-style:normal;transform:scaleX(0.7978);">4,37</div>
<div class="t" style="left:839.8px;top:403.44px;font-size:8.576px;color:#7a7a80;font-weight:400;font-style:normal;transform:scaleX(0.7978);">1,83</div>
<div class="t" style="left:946.0px;top:403.44px;font-size:8.576px;color:#7a7a80;font-weight:400;font-style:normal;transform:scaleX(0.7978);">0,85</div>
<svg style="left:147px;top:438.4px" width="4" height="5" viewBox="0 0 4 5"><path d="M0.4 0.3 L3.4 2.5 L0.4 4.7" fill="none" stroke="#6a6a70" stroke-width="0.8"/></svg>
<div class="t" style="left:159px;top:428.46px;font-size:8.430px;color:#8662c0;font-weight:400;font-style:normal;transform:scaleX(0.7997);">KORKUNOV KOL.KONF.OREKH ASSRT.</div>
<div class="t" style="left:159px;top:439.76px;font-size:8.430px;color:#8662c0;font-weight:400;font-style:normal;transform:scaleX(0.7906);">ASR. MOL&amp;TYOM. SHOKLD. POKR.</div>
<div class="a" style="left:326px;top:433.59999999999997px;width:57px;height:17.3px;border:1px solid #a07ed4;border-radius:2px;box-sizing:border-box;background:#fdfcfe"></div>
<svg style="left:334.4px;top:438.7px" width="7.2" height="6.8" viewBox="0 0 7.2 6.8"><path d="M0.5 3 L1.8 3 L1.8 6.4 L0.5 6.4 Z M1.8 3 L3.3 0.5 Q4.2 0.5 4.1 1.6 L3.8 2.6 L6.2 2.6 Q6.9 2.8 6.7 3.5 L6.2 5.9 Q6 6.4 5.4 6.4 L1.8 6.4" fill="none" stroke="#7a4cb6" stroke-width="0.8"/></svg>
<div class="t" style="left:346.5px;top:438.36px;font-size:8.430px;color:#7a4cb6;font-weight:400;font-style:normal;transform:scaleX(0.8886);">Оцінити</div>
<div class="t" style="left:412.7px;top:438.54px;font-size:8.576px;color:#7a7a80;font-weight:400;font-style:normal;transform:scaleX(0.7978);">5,28</div>
<div class="t" style="left:519.9px;top:438.54px;font-size:8.576px;color:#7a7a80;font-weight:400;font-style:normal;transform:scaleX(0.7978);">5,61</div>
<div class="t" style="left:626.4px;top:438.54px;font-size:8.576px;color:#7a7a80;font-weight:400;font-style:normal;transform:scaleX(0.7978);">5,65</div>
<div class="t" style="left:732.9px;top:438.54px;font-size:8.576px;color:#7a7a80;font-weight:400;font-style:normal;transform:scaleX(0.7978);">3,61</div>
<div class="t" style="left:839.8px;top:438.54px;font-size:8.576px;color:#7a7a80;font-weight:400;font-style:normal;transform:scaleX(0.7978);">4,05</div>
<div class="t" style="left:946.0px;top:438.54px;font-size:8.576px;color:#7a7a80;font-weight:400;font-style:normal;transform:scaleX(0.7978);">1,07</div>
</div>
<div class="a" style="left:1006.6px;top:234.5px;width:4.6px;height:213px;background:#f6f6f8"></div>
<div class="a" style="left:1007px;top:234.7px;width:4px;height:92.3px;background:#79797e;border-radius:2px"></div>
<div class="a" style="left:141.2px;top:443.7px;width:611px;height:3.8px;background:#6e6e72;border-radius:2px"></div>
<div class="t" style="left:796.2px;top:458.26px;font-size:8.430px;color:#66666c;font-weight:400;font-style:normal;transform:scaleX(0.8742);">Записи з 1 по 16 із 16 записів</div>
<svg style="left:905px;top:460.5px" width="3.5" height="5" viewBox="0 0 3.5 5"><path d="M3.1 0.3 L0.5 2.5 L3.1 4.7" fill="none" stroke="#b0b0b6" stroke-width="0.7"/></svg>
<div class="a" style="left:913.3px;top:456.3px;width:13.2px;height:12.5px;border:1px solid #a584d6;border-radius:1.5px;box-sizing:border-box;background:#fdfcfe"></div>
<div class="t" style="left:918.6px;top:459.07px;font-size:7.122px;color:#4e3d7e;font-weight:700;font-style:normal;transform:scaleX(0.7055);">1</div>
<svg style="left:931.3px;top:460.5px" width="3.5" height="5" viewBox="0 0 3.5 5"><path d="M0.4 0.3 L3 2.5 L0.4 4.7" fill="none" stroke="#b0b0b6" stroke-width="0.7"/></svg>
<div class="a" style="left:940px;top:456.3px;width:62.8px;height:12.5px;border:1px solid #e4e3e8;border-radius:1.5px;box-sizing:border-box;background:#fdfcfe"></div>
<div class="t" style="left:944.8px;top:458.54px;font-size:8.576px;color:#606066;font-weight:400;font-style:normal;transform:scaleX(1.0398);">20 / сторінку</div>
<div class="a" style="left:976.6px;top:458px;width:32px;height:32px;background:#6716d2;border-radius:50%"></div>
<svg style="left:984.4px;top:468px" width="16" height="13" viewBox="0 0 16 13"><path d="M0 0.6 L15.4 0 L15.2 10.6 L10 10.8 L8.1 12.6 L6.6 10.9 L0.3 11 Z" fill="#fff"/></svg>
</body></html>
